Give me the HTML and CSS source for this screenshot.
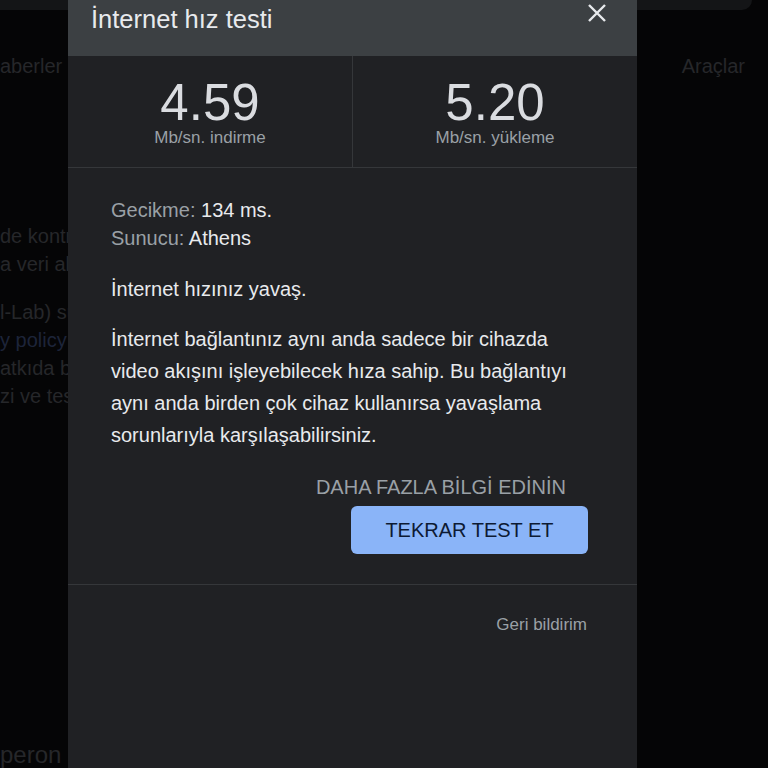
FILE: index.html
```html
<!DOCTYPE html>
<html lang="tr">

<head>
    <meta charset="UTF-8">
    <title>İnternet hız testi</title>
    <link rel="stylesheet" href="styles.css">
</head>

<body>

    <div class="page">
        <div class="search_bar"></div>
        <div class="tabs">
            <span class="tab_left">aberler</span>
            <span class="tab_right">Araçlar</span>
        </div>
        <div class="page_text">
            <p>de kontrol edilir</p>
            <p>a veri akışı</p>
            <p class="gap">l-Lab) sunucusu</p>
            <p class="link">y policy</p>
            <p>atkıda bulunur</p>
            <p>zi ve test</p>
        </div>
        <div class="page_bottom">peron</div>
    </div>

    <div class="dialog">
        <div class="dialog_head">
            <span class="dialog_title">İnternet hız testi</span>
            <svg class="close" width="20" height="20" viewBox="0 0 20 20">
                <path d="M2 2 L18 18 M18 2 L2 18" stroke="#e8eaed" stroke-width="2.4" fill="none"/>
            </svg>
        </div>

        <div class="stats">
            <div class="stat">
                <div class="stat_num">4.59</div>
                <div class="stat_label">Mb/sn. indirme</div>
            </div>
            <div class="stat">
                <div class="stat_num">5.20</div>
                <div class="stat_label">Mb/sn. yükleme</div>
            </div>
        </div>

        <div class="dialog_body">
            <div class="meta">
                <div><span class="dim">Gecikme:</span> 134 ms.</div>
                <div><span class="dim">Sunucu:</span> Athens</div>
            </div>
            <p class="verdict">İnternet hızınız yavaş.</p>
            <p class="desc">İnternet bağlantınız aynı anda sadece bir cihazda video akışını işleyebilecek hıza sahip. Bu bağlantıyı aynı anda birden çok cihaz kullanırsa yavaşlama sorunlarıyla karşılaşabilirsiniz.</p>
            <div class="more">DAHA FAZLA BİLGİ EDİNİN</div>
            <div class="btn_row">
                <button class="retry">TEKRAR TEST ET</button>
            </div>
        </div>

        <div class="dialog_foot">Geri bildirim</div>
    </div>

</body>

</html>
```

FILE: styles.css
```css
html,
body {
    margin: 0;
    height: 100%;
    background-color: #050506;
    font-family: "Liberation Sans", Arial, sans-serif;
    overflow: hidden;
}

.page {
    height: 768px;
    display: flex;
    flex-direction: column;
    color: #26272a;
    font-size: 20px;
}

.search_bar {
    height: 10px;
    width: 752px;
    background-color: #141517;
    border-radius: 0 0 12px 0;
}

.tabs {
    display: flex;
    justify-content: space-between;
    margin-top: 45px;
    height: 22px;
    line-height: 22px;
}

.tab_right {
    margin-right: 23px;
}

.page_text {
    margin-top: 145px;
    width: 68px;
    overflow: hidden;
}

.page_text p {
    margin: 0;
    line-height: 28px;
    white-space: nowrap;
}

.page_text .gap {
    margin-top: 20px;
}

.page_text .link {
    color: #1d2439;
}

.page_bottom {
    margin-top: auto;
    font-size: 24px;
    line-height: 28px;
    margin-bottom: -1px;
    width: 68px;
    overflow: hidden;
}

.dialog {
    position: absolute;
    top: 0;
    left: 68px;
    width: 569px;
    bottom: 0;
    background-color: #202124;
    color: #e8eaed;
    display: flex;
    flex-direction: column;
}

.dialog_head {
    height: 56px;
    background-color: #3c4043;
    display: flex;
    justify-content: space-between;
    align-items: flex-start;
    padding: 0 30px 0 23px;
    box-sizing: border-box;
}

.dialog_title {
    font-size: 25.5px;
    line-height: 38px;
    color: #e8eaed;
}

.close {
    margin-top: 3px;
}

.stats {
    display: flex;
    height: 112px;
    border-bottom: 1px solid #35373a;
    box-sizing: border-box;
}

.stat {
    flex: 1;
    text-align: center;
    padding-top: 21px;
}

.stat + .stat {
    border-left: 1px solid #35373a;
}

.stat_num {
    font-size: 51px;
    line-height: 52px;
    color: #dadce0;
}

.stat_label {
    font-size: 17px;
    line-height: 18px;
    color: #9aa0a6;
}

.dialog_body {
    padding: 28px 49px 30px 43px;
    font-size: 20px;
    border-bottom: 1px solid #35373a;
}

.meta {
    line-height: 28px;
}

.dim {
    color: #9aa0a6;
}

.verdict {
    margin: 21px 0 0;
    line-height: 32px;
}

.desc {
    margin: 18px 0 0;
    line-height: 32px;
}

.more {
    margin-top: 22px;
    text-align: right;
    color: #9aa0a6;
    line-height: 28px;
    padding-right: 22px;
}

.btn_row {
    display: flex;
    justify-content: flex-end;
    margin-top: 5px;
}

.retry {
    width: 237px;
    height: 48px;
    border: none;
    border-radius: 6px;
    background-color: #8ab4f8;
    color: #0d1a33;
    font-family: "Liberation Sans", Arial, sans-serif;
    font-size: 20px;
}

.dialog_foot {
    text-align: right;
    padding: 28px 50px 0 0;
    font-size: 17px;
    line-height: 24px;
    color: #9aa0a6;
}
```
